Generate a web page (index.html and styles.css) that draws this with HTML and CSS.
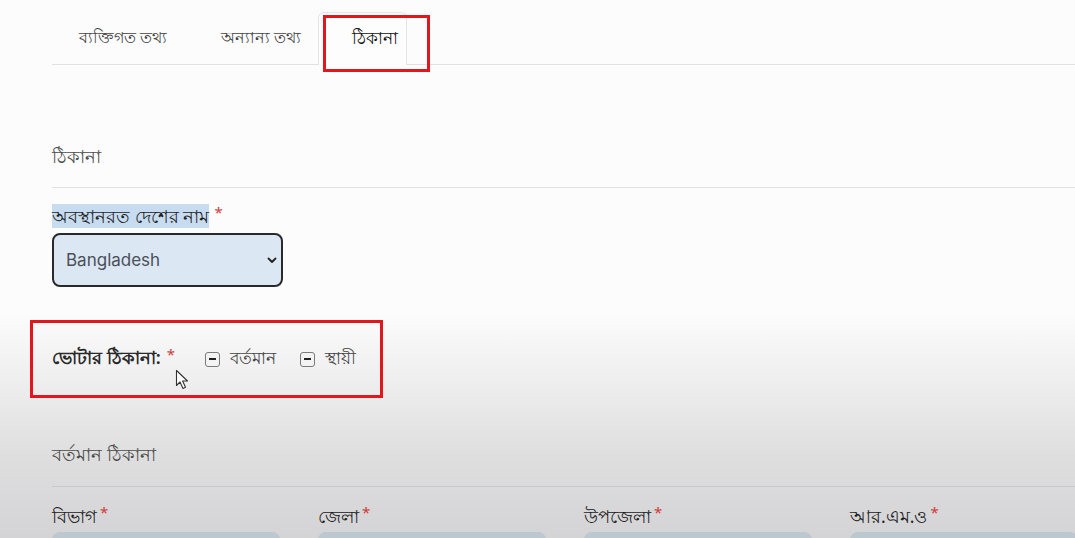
FILE: index.html
```html
<!DOCTYPE html>
<html lang="bn">
<head>
<meta charset="utf-8">
<title>ঠিকানা</title>
<link rel="stylesheet" href="styles.css">
</head>
<body>
<div class="page">
  <nav class="tabs">
    <div class="tab tab-1">ব্যক্তিগত তথ্য</div>
    <div class="tab tab-2">অন্যান্য তথ্য</div>
    <div class="tab tab-3 active">ঠিকানা</div>
  </nav>

  <div class="section-title first">ঠিকানা</div>

  <div class="field country">
    <label class="label"><span class="hl">অবস্থানরত দেশের নাম</span><span class="req">*</span></label>
    <div class="select">
      <span>Bangladesh</span>
      <svg class="chev" width="10" height="7" viewBox="0 0 10 7"><path d="M1.5 1.5 L5 5 L8.5 1.5" fill="none" stroke="#222" stroke-width="1.8" stroke-linecap="round" stroke-linejoin="round"/></svg>
    </div>
  </div>

  <div class="voter">
    <span class="voter-label">ভোটার ঠিকানা:</span><span class="req">*</span>
    <span class="check first-check"><span class="box"><i></i></span>বর্তমান</span>
    <span class="check"><span class="box"><i></i></span>স্থায়ী</span>
  </div>

  <div class="section-title second">বর্তমান ঠিকানা</div>

  <div class="grid">
    <div class="col"><div class="label big">বিভাগ<span class="req">*</span></div><div class="input"></div></div>
    <div class="col"><div class="label big">জেলা<span class="req">*</span></div><div class="input"></div></div>
    <div class="col"><div class="label big">উপজেলা<span class="req">*</span></div><div class="input"></div></div>
    <div class="col"><div class="label big">আর.এম.ও<span class="req">*</span></div><div class="input"></div></div>
  </div>
</div>

<div class="mark mark-tab"></div>
<div class="mark mark-voter"></div>
<svg class="cursor" width="16" height="22" viewBox="0 0 16 22"><path d="M1.5 1.5 L1.5 16.5 L5 13 L8 19.5 L10.5 18.3 L7.6 12 L12.5 12 Z" fill="#fff" stroke="#333" stroke-width="1.1" stroke-linejoin="round"/></svg>
</body>
</html>
```
FILE: styles.css
```css
html, body {
  margin: 0;
  padding: 0;
  width: 1075px;
  height: 538px;
  overflow: hidden;
}
body {
  position: relative;
  font-family: "Noto Sans", "Liberation Sans", sans-serif;
  color: #222;
  background: linear-gradient(to bottom, #fcfcfd 0%, #fcfcfd 58%, #ededee 72%, #dededf 85%, #d4d4d6 100%);
}
.page {
  padding: 12px 0 0 52px;
  width: 1100px;
}
.tabs {
  display: flex;
  height: 52px;
  border-bottom: 1px solid #dfe1e4;
}
.tab {
  display: flex;
  align-items: center;
  font-size: 15.5px;
  color: #444;
  border: 1px solid transparent;
  border-bottom: none;
  border-radius: 6px 6px 0 0;
  height: 52px;
  box-sizing: border-box;
  white-space: nowrap;
}
.tab-1 { width: 140px; padding-left: 26px; }
.tab-2 { width: 126px; padding-left: 28px; }
.tab-3 { width: 89px; padding-left: 33px; }
.tab.active {
  border-color: #e3e5e8;
  color: #111;
  font-size: 16.5px;
  font-weight: 500;
  background: #fdfdfe;
  height: 53px;
}
.section-title {
  font-size: 17.5px;
  line-height: 22px;
  color: #4a4a4a;
  border-bottom: 1px solid #e0e1e3;
}
.section-title.first {
  margin-top: 80px;
  padding-bottom: 20px;
}
.section-title.second {
  margin-top: 69px;
  padding-bottom: 21px;
  border-bottom-color: #c9c9cb;
}
.field.country {
  margin-top: 17px;
}
.label {
  display: block;
  font-size: 18px;
  line-height: 23px;
  height: 23px;
  color: #1f1f1f;
  white-space: nowrap;
}
.hl {
  background: #c8dcf1;
}
.req {
  display: inline-block;
  line-height: 1;
  color: #d23a3a;
  margin-left: 5px;
  font-size: 15px;
  position: relative;
  top: -5px;
}
.select {
  margin-top: 5px;
  width: 231px;
  height: 54px;
  box-sizing: border-box;
  border: 2px solid #2a2a2a;
  border-radius: 8px;
  background: #dbe7f2;
  display: flex;
  align-items: center;
  justify-content: space-between;
  padding: 0 4px 0 12px;
  font-family: Inter, "Liberation Sans", sans-serif;
  font-size: 17px;
  color: #4a505a;
}
.voter {
  margin-top: 57px;
  height: 30px;
  display: flex;
  align-items: center;
}
.voter-label {
  font-size: 18px;
  font-weight: 600;
  color: #2a2a2a;
}
.voter .req {
  margin-left: 6px;
  margin-right: 30px;
}
.check {
  display: flex;
  align-items: center;
  font-size: 16.5px;
  color: #444;
}
.first-check {
  margin-right: 24px;
}
.box {
  width: 15px;
  height: 15px;
  box-sizing: border-box;
  border: 1px solid #7b7b7b;
  border-radius: 3px;
  background: #f3f3f4;
  display: flex;
  align-items: center;
  justify-content: center;
  margin-right: 10px;
}
.box i {
  display: block;
  width: 7px;
  height: 2px;
  background: #222;
}
.grid {
  margin-top: 17px;
  display: grid;
  grid-template-columns: repeat(4, 228px);
  column-gap: 38px;
}
.label.big {
  font-size: 17.5px;
  line-height: 24px;
  height: 24px;
  color: #202020;
}
.label.big .req {
  margin-left: 3px;
}
.input {
  margin-top: 4px;
  height: 50px;
  border-radius: 8px;
  background: #bcc8cf;
}
.mark {
  position: absolute;
  border: 3px solid #e3171b;
  box-sizing: border-box;
}
.mark-tab {
  left: 323px;
  top: 15px;
  width: 107px;
  height: 57px;
}
.mark-voter {
  left: 30px;
  top: 320px;
  width: 353px;
  height: 78px;
}
.cursor {
  position: absolute;
  left: 175px;
  top: 369px;
}
```
